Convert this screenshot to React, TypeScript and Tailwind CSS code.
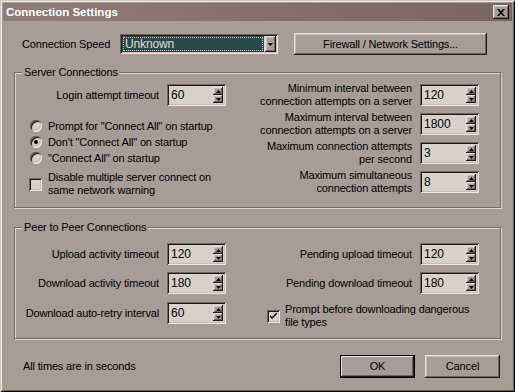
import React from "react";

const BG = "bg-[#a89d96]";
const RAISED =
  "shadow-[inset_-1px_-1px_0_#1e1a18,inset_1px_1px_0_#e6e0da,inset_-2px_-2px_0_#6e645e,inset_2px_2px_0_#c4bcb4]";
const SUNKEN =
  "shadow-[inset_1px_1px_0_#6e645e,inset_-1px_-1px_0_#ece7e2,inset_2px_2px_0_#1e1a18,inset_-2px_-2px_0_#c4bcb4]";
const ETCHED =
  "border border-[#786d66] shadow-[1px_1px_0_#ddd6cf,inset_1px_1px_0_#ddd6cf]";

function SpinBtn({ up }: { up?: boolean }) {
  return (
    <div
      className={`w-[10px] h-[9px] flex items-center justify-center bg-[#a89d96] ${RAISED}`}
    >
      <svg width="5" height="3" viewBox="0 0 5 3">
        {up ? (
          <polygon points="2.5,0 5,3 0,3" fill="#000" />
        ) : (
          <polygon points="0,0 5,0 2.5,3" fill="#000" />
        )}
      </svg>
    </div>
  );
}

function Spin({ v }: { v: string }) {
  return (
    <div className={`w-[59px] h-[22px] p-[2px] flex bg-[#d8d0c9] ${SUNKEN} shrink-0`}>
      <span className="flex-1 pl-[2px] leading-[18px] text-[12px] tracking-normal">{v}</span>
      <div className="flex flex-col justify-between w-[10px] py-[1px] mr-[1px]">
        <SpinBtn up />
        <SpinBtn />
      </div>
    </div>
  );
}

function Radio({ checked }: { checked?: boolean }) {
  return (
    <div
      className={`w-[12px] h-[12px] rounded-full bg-[#d8d0c9] flex items-center justify-center shrink-0 shadow-[inset_1px_1px_0_#6e645e,inset_-1px_-1px_0_#f0ebe6,inset_2px_2px_0_#2b2623,inset_-2px_-2px_0_#c4bcb4]`}
    >
      {checked && <div className="w-[4px] h-[4px] rounded-full bg-black" />}
    </div>
  );
}

function Check({ checked }: { checked?: boolean }) {
  return (
    <div
      className={`w-[13px] h-[13px] bg-[#d8d0c9] flex items-center justify-center shrink-0 ${SUNKEN}`}
    >
      {checked && (
        <svg width="7" height="7" viewBox="0 0 7 7">
          <path d="M0 2 L2 4 L7 -1 L7 1 L2 6 L0 4 Z" fill="#000" />
        </svg>
      )}
    </div>
  );
}

function LeftRow({ label, v }: { label: string; v: string }) {
  return (
    <div className="flex items-center h-[22px]">
      <span className="w-[144px] text-right">{label}</span>
      <div className="ml-[8px]">
        <Spin v={v} />
      </div>
    </div>
  );
}

function RightRow({ label, v }: { label: React.ReactNode; v: string }) {
  return (
    <div className="flex items-center justify-end h-[22px] mr-[21px]">
      <span className="text-right leading-[13px]">{label}</span>
      <div className="ml-[8px]">
        <Spin v={v} />
      </div>
    </div>
  );
}

export default function App() {
  return (
    <div
      className={`w-[515px] h-[392px] ${BG} p-[3px] flex flex-col text-[11px] tracking-[-0.15px] text-black shadow-[inset_1px_1px_0_#cfc7bf,inset_-1px_-1px_0_#000,inset_2px_2px_0_#f0ebe6,inset_-2px_-2px_0_#6e645e]`}
      style={{ fontFamily: '"Liberation Sans", Arial, sans-serif' }}
    >
      {/* Title bar */}
      <div className="h-[18px] flex items-center bg-gradient-to-r from-[#8e7d76] to-[#7a6660] pl-[3px]">
        <span className="text-white font-bold text-[11.5px] leading-[18px] tracking-normal">
          Connection Settings
        </span>
        <div
          className={`ml-auto mr-[3px] w-[16px] h-[14px] bg-[#a89d96] flex items-center justify-center ${RAISED}`}
        >
          <svg width="8" height="7" viewBox="0 0 8 7">
            <path d="M0 0 L2 0 L4 2.3 L6 0 L8 0 L5 3.5 L8 7 L6 7 L4 4.7 L2 7 L0 7 L3 3.5 Z" fill="#000" />
          </svg>
        </div>
      </div>

      {/* Row 1 */}
      <div className="flex items-center h-[22px] mt-[12px] pl-[19px]">
        <span className="w-[98px]">Connection Speed</span>
        <div className={`w-[158px] h-[20px] p-[2px] flex bg-[#d8d0c9] ${SUNKEN}`}>
          <div className="flex-1 bg-[#284a48] p-[1px] mr-[1px]">
            <div className="h-full border border-dotted border-[#e8b4ac] text-[#e4dcd6] leading-[12px] pl-[1px] text-[12px]">
              Unknown
            </div>
          </div>
          <div
            className={`w-[11px] bg-[#a89d96] flex items-center justify-center ${RAISED}`}
          >
            <svg width="5" height="3" viewBox="0 0 5 3">
              <polygon points="0,0 5,0 2.5,3" fill="#000" />
            </svg>
          </div>
        </div>
        <div
          className={`ml-[16px] w-[193px] h-[22px] flex items-center justify-center ${BG} ${RAISED}`}
        >
          Firewall / Network Settings...
        </div>
      </div>

      {/* Server Connections */}
      <div className={`mx-[11px] mt-[17px] h-[136px] flex flex-col ${ETCHED}`}>
        <span className={`-mt-[8px] ml-[7px] self-start px-[2px] h-[14px] leading-[14px] ${BG}`}>
          Server Connections
        </span>
        <div className="flex mt-[5px]">
          <div className="w-[240px] flex flex-col">
            <LeftRow label="Login attempt timeout" v="60" />
            <div className="flex flex-col mt-[12px] pl-[15px]">
              <div className="flex items-center h-[16px] gap-[6px]">
                <Radio />
                <span>Prompt for "Connect All" on startup</span>
              </div>
              <div className="flex items-center h-[16px] gap-[6px]">
                <Radio checked />
                <span>Don't "Connect All" on startup</span>
              </div>
              <div className="flex items-center h-[16px] gap-[6px]">
                <Radio />
                <span>"Connect All" on startup</span>
              </div>
            </div>
            <div className="flex items-center mt-[5px] pl-[14px] gap-[6px]">
              <Check />
              <span className="leading-[13px]">
                Disable multiple server connect on
                <br />
                same network warning
              </span>
            </div>
          </div>
          <div className="flex-1 flex flex-col gap-[7px]">
            <RightRow
              label={
                <>
                  Minimum interval between
                  <br />
                  connection attempts on a server
                </>
              }
              v="120"
            />
            <RightRow
              label={
                <>
                  Maximum interval between
                  <br />
                  connection attempts on a server
                </>
              }
              v="1800"
            />
            <RightRow
              label={
                <>
                  Maximum connection attempts
                  <br />
                  per second
                </>
              }
              v="3"
            />
            <RightRow
              label={
                <>
                  Maximum simultaneous
                  <br />
                  connection attempts
                </>
              }
              v="8"
            />
          </div>
        </div>
      </div>

      {/* Peer to Peer */}
      <div className={`mx-[11px] mt-[19px] h-[112px] flex flex-col ${ETCHED}`}>
        <span className={`-mt-[8px] ml-[7px] self-start px-[2px] h-[14px] leading-[14px] ${BG}`}>
          Peer to Peer Connections
        </span>
        <div className="flex mt-[9px]">
          <div className="w-[240px] flex flex-col">
            <LeftRow label="Upload activity timeout" v="120" />
            <div className="mt-[7px]">
              <LeftRow label="Download activity timeout" v="180" />
            </div>
            <div className="mt-[8px]">
              <LeftRow label="Download auto-retry interval" v="60" />
            </div>
          </div>
          <div className="flex-1 flex flex-col">
            <RightRow label="Pending upload timeout" v="120" />
            <div className="mt-[7px]">
              <RightRow label="Pending download timeout" v="180" />
            </div>
            <div className="flex items-center mt-[9px] pl-[12px] gap-[5px]">
              <Check checked />
              <span className="leading-[13px]">
                Prompt before downloading dangerous
                <br />
                file types
              </span>
            </div>
          </div>
        </div>
      </div>

      {/* Bottom */}
      <div className="flex items-center h-[23px] mt-[16px] pl-[20px] pr-[12px]">
        <span>All times are in seconds</span>
        <div
          className={`ml-auto w-[75px] h-[23px] flex items-center justify-center ${BG} border border-black shadow-[inset_-1px_-1px_0_#1e1a18,inset_1px_1px_0_#e6e0da,inset_-2px_-2px_0_#6e645e]`}
        >
          OK
        </div>
        <div
          className={`ml-[10px] w-[75px] h-[23px] flex items-center justify-center ${BG} ${RAISED}`}
        >
          Cancel
        </div>
      </div>
    </div>
  );
}
